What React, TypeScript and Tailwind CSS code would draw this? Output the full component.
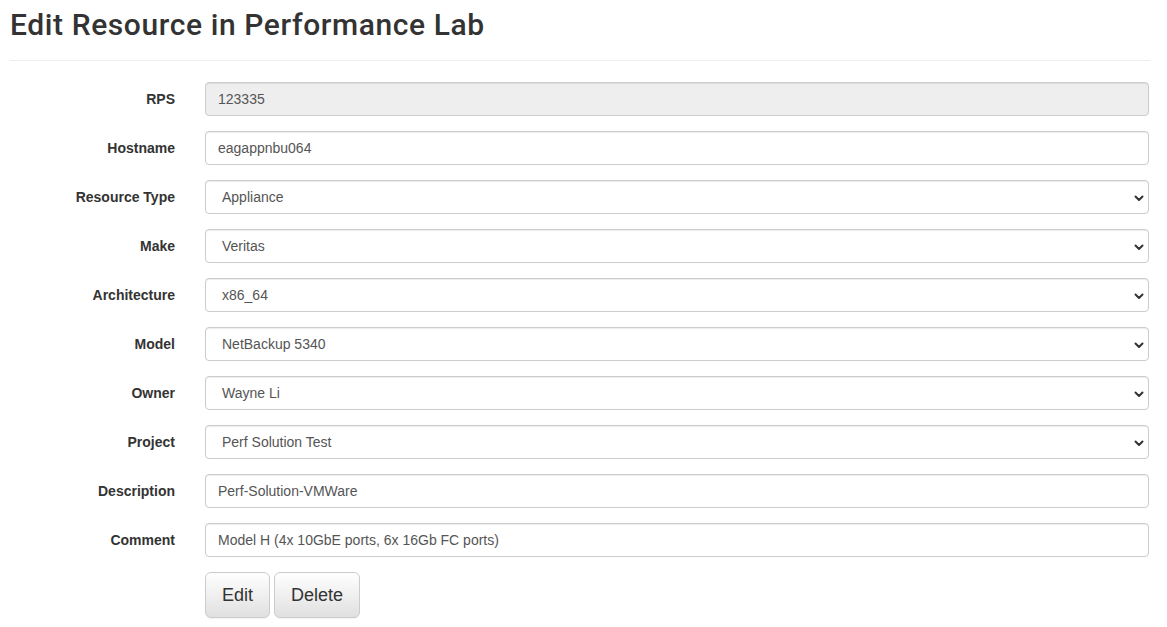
const FIELDS: { label: string; value: string; kind: "disabled" | "input" | "select" }[] = [
  { label: "RPS", value: "123335", kind: "disabled" },
  { label: "Hostname", value: "eagappnbu064", kind: "input" },
  { label: "Resource Type", value: "Appliance", kind: "select" },
  { label: "Make", value: "Veritas", kind: "select" },
  { label: "Architecture", value: "x86_64", kind: "select" },
  { label: "Model", value: "NetBackup 5340", kind: "select" },
  { label: "Owner", value: "Wayne Li", kind: "select" },
  { label: "Project", value: "Perf Solution Test", kind: "select" },
  { label: "Description", value: "Perf-Solution-VMWare", kind: "input" },
  { label: "Comment", value: "Model H (4x 10GbE ports, 6x 16Gb FC ports)", kind: "input" },
];

function Chevron() {
  return (
    <svg width="10" height="7" viewBox="0 0 10 7" className="absolute right-[4px] top-[14px]">
      <path d="M1.5 1.5 L5 5 L8.5 1.5" fill="none" stroke="#333" strokeWidth="2" strokeLinecap="round" strokeLinejoin="round" />
    </svg>
  );
}

export default function App() {
  return (
    <div className="min-h-screen bg-white font-['Liberation_Sans',Arial,sans-serif] text-[#333]">
      <div className="w-[1140px] ml-[10px]">
        {/* Header */}
        <div className="border-b border-[#eee] pt-[8px] pb-[19px]">
          <h2 className="font-['Roboto',sans-serif] text-[30px] leading-[33px] font-medium text-[#333] tracking-[0.6px]">
            Edit Resource in Performance Lab
          </h2>
        </div>

        {/* Form */}
        <div className="pt-[21px] flex flex-col gap-[15px]">
          {FIELDS.map((f) => (
            <div key={f.label} className="flex items-center">
              <label className="w-[165px] text-right text-[14px] font-bold">{f.label}</label>
              <div
                className={
                  "relative ml-[30px] w-[944px] h-[34px] rounded-[4px] border border-[#ccc] shadow-[inset_0_1px_1px_rgba(0,0,0,0.075)] flex items-center text-[14px] text-[#555] " +
                  (f.kind === "disabled" ? "bg-[#eee] pl-[12px]" : f.kind === "select" ? "bg-white pl-[16px]" : "bg-white pl-[12px]")
                }
              >
                {f.value}
                {f.kind === "select" && <Chevron />}
              </div>
            </div>
          ))}

          {/* Buttons */}
          <div className="flex gap-[4px] ml-[195px]">
            <button className="h-[46px] px-[16px] rounded-[6px] border border-[#ccc] bg-gradient-to-b from-white to-[#e0e0e0] text-[18px] text-[#333] shadow-[0_1px_1px_rgba(0,0,0,0.05)]">
              Edit
            </button>
            <button className="h-[46px] px-[16px] rounded-[6px] border border-[#ccc] bg-gradient-to-b from-white to-[#e0e0e0] text-[18px] text-[#333] shadow-[0_1px_1px_rgba(0,0,0,0.05)]">
              Delete
            </button>
          </div>
        </div>
      </div>
    </div>
  );
}
